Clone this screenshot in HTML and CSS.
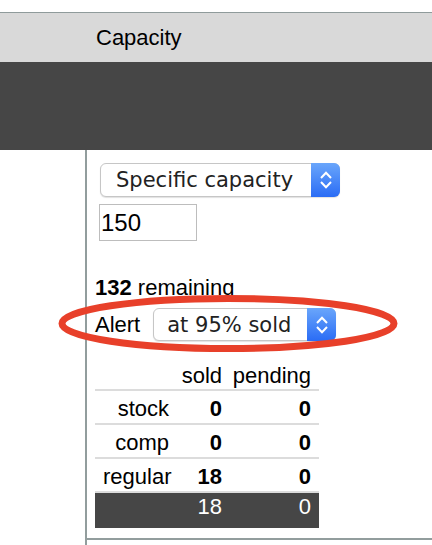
FILE: index.html
```html
<!DOCTYPE html>
<html lang="en">
  <head>
    <meta charset="UTF-8" />
    <title>Capacity</title>
    <link rel="stylesheet" href="styles.css">
  </head>
  <body>
    <div class="sheet">
      <div class="head">
        <div></div>
        <div class="title">Capacity</div>
      </div>
      <div class="band"></div>

      <div class="row">
        <div class="side"></div>
        <div class="main">
          <div class="select wide">
            <span class="value">Specific capacity</span>
            <span class="arrows">
              <svg width="12" height="18" viewBox="0 0 12 18">
                <polyline points="1,7 6,1.8 11,7" />
                <polyline points="1,11 6,16.2 11,11" />
              </svg>
            </span>
          </div>
          <input class="cap-input" type="text" value="150" />

          <div class="remaining"><b>132</b> remaining</div>

          <div class="alert-row">
            <span>Alert</span>
            <div class="select narrow">
              <span class="value">at 95% sold</span>
              <span class="arrows">
                <svg width="12" height="18" viewBox="0 0 12 18">
                  <polyline points="1,7 6,1.8 11,7" />
                  <polyline points="1,11 6,16.2 11,11" />
                </svg>
              </span>
            </div>
          </div>

          <table class="counts">
            <colgroup>
              <col style="width: 82px" />
              <col style="width: 53px" />
              <col style="width: 89px" />
            </colgroup>
            <thead>
              <tr>
                <th></th>
                <th>sold</th>
                <th>pending</th>
              </tr>
            </thead>
            <tbody>
              <tr>
                <td>stock</td>
                <td class="num">0</td>
                <td class="num">0</td>
              </tr>
              <tr>
                <td>comp</td>
                <td class="num">0</td>
                <td class="num">0</td>
              </tr>
              <tr>
                <td>regular</td>
                <td class="num">18</td>
                <td class="num">0</td>
              </tr>
              <tr class="total">
                <td></td>
                <td>18</td>
                <td>0</td>
              </tr>
            </tbody>
          </table>
        </div>
      </div>

      <div class="row tail">
        <div class="side"></div>
        <div></div>
      </div>
    </div>

    <!-- red annotation drawn over the alert row -->
    <svg class="mark" width="348" height="65" viewBox="0 0 348 65">
      <ellipse cx="174" cy="32.5" rx="166" ry="25" />
    </svg>
  </body>
</html>
```

FILE: styles.css
```css
body {
  margin: 0;
  font-family: "Liberation Sans", Arial, sans-serif;
  font-size: 22px;
  color: #000;
  background-color: #fff;
}
.sheet {
  margin-top: 12px;
  border-top: 1px solid #8f9b9b;
}
.head {
  display: grid;
  grid-template-columns: 86px 1fr;
  align-items: center;
  height: 49px;
  background-color: #d9d9d9;
}
.head .title {
  padding-left: 10px;
}
.band {
  height: 88px;
  background-color: #464646;
}
.row {
  display: grid;
  grid-template-columns: 87px 1fr;
}
.side {
  border-right: 2px solid #929d9d;
}
.main {
  padding: 13px 0 10px 8px;
  border-bottom: 2px solid #929d9d;
}
.tail {
  height: 10px;
}

.select {
  display: flex;
  align-items: stretch;
  box-sizing: border-box;
  background-color: #fff;
  border: 1px solid #c6c6c6;
  border-radius: 6px;
  box-shadow: 0 1px 1px rgba(0, 0, 0, 0.12);
  font-family: "DejaVu Sans", sans-serif;
  font-size: 21px;
  color: #222;
}
.select .value {
  flex: 1;
  display: flex;
  align-items: center;
  padding-left: 15px;
}
.select .arrows {
  width: 29px;
  display: flex;
  align-items: center;
  justify-content: center;
  margin: -1px -1px -1px 0;
  border-radius: 0 6px 6px 0;
  background: linear-gradient(#6aa6fb, #2a6cf5);
}
.arrows polyline {
  fill: none;
  stroke: #fff;
  stroke-width: 2;
}
.select.wide {
  width: 240px;
  height: 34px;
  margin-left: 5px;
}
.select.narrow {
  width: 183px;
  height: 33px;
}
.select.narrow .value {
  padding-left: 13px;
}

.cap-input {
  display: block;
  box-sizing: border-box;
  width: 98px;
  height: 37px;
  margin: 7px 0 0 4px;
  padding: 0 0 0 1px;
  border: 1px solid #bdbdbd;
  border-radius: 0;
  font-family: "Liberation Sans", Arial, sans-serif;
  font-size: 24px;
  color: #000;
}

.remaining {
  margin-top: 34px;
  line-height: 25px;
}
.alert-row {
  display: flex;
  align-items: center;
  gap: 13px;
  margin-top: 8px;
}

.counts {
  margin-top: 16px;
  border-collapse: collapse;
  table-layout: fixed;
  width: 224px;
}
.counts th,
.counts td {
  padding: 5px 8px 2px;
  line-height: 25px;
  text-align: right;
  font-weight: normal;
  border-bottom: 2px solid #dcdcdc;
}
.counts th {
  padding: 6px 8px 1px 0;
}
.counts td.num {
  font-weight: bold;
}
.counts tr.total td {
  padding: 1px 8px 9px;
  border-bottom: none;
  background-color: #464646;
  color: #fff;
}

.mark {
  position: absolute;
  left: 54px;
  top: 291px;
}
.mark ellipse {
  fill: none;
  stroke: #e8402a;
  stroke-width: 7;
}
```
